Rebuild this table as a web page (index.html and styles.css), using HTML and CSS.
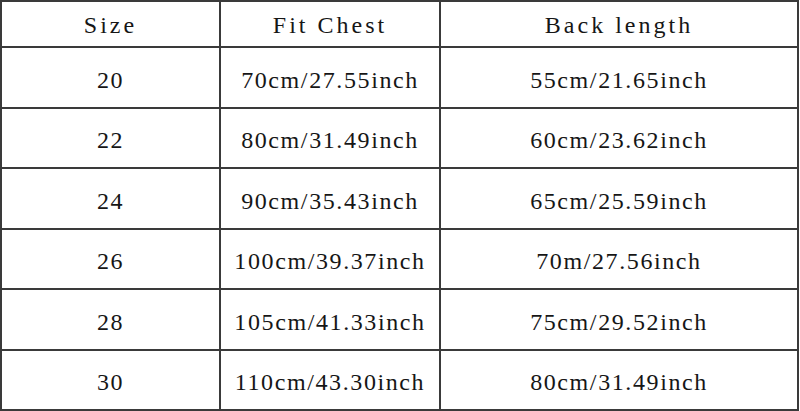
FILE: index.html
```html
<!DOCTYPE html>
<html>
<head>
<meta charset="utf-8">
<link rel="stylesheet" href="styles.css">
</head>
<body>
<div class="size-table">
  <div class="cell head">Size</div>
  <div class="cell head">Fit Chest</div>
  <div class="cell head">Back length</div>
  <div class="cell">20</div>
  <div class="cell">70cm/27.55inch</div>
  <div class="cell">55cm/21.65inch</div>
  <div class="cell">22</div>
  <div class="cell">80cm/31.49inch</div>
  <div class="cell">60cm/23.62inch</div>
  <div class="cell">24</div>
  <div class="cell">90cm/35.43inch</div>
  <div class="cell">65cm/25.59inch</div>
  <div class="cell">26</div>
  <div class="cell">100cm/39.37inch</div>
  <div class="cell">70m/27.56inch</div>
  <div class="cell">28</div>
  <div class="cell">105cm/41.33inch</div>
  <div class="cell">75cm/29.52inch</div>
  <div class="cell">30</div>
  <div class="cell">110cm/43.30inch</div>
  <div class="cell">80cm/31.49inch</div>
</div>
</body>
</html>
```

FILE: styles.css
```css
html, body {
  margin: 0;
  padding: 0;
  background: #ffffff;
}
.size-table {
  display: grid;
  width: 799px;
  box-sizing: border-box;
  grid-template-columns: 217px 218px 356px;
  grid-template-rows: 44px repeat(6, 58.5px);
  gap: 2px;
  padding: 2px;
  background: #3a3a3a;
  font-family: "Liberation Serif", serif;
  font-size: 24px;
  letter-spacing: 1.6px;
  color: #161616;
}
.cell {
  background: #ffffff;
  display: flex;
  align-items: center;
  justify-content: center;
  padding-top: 6px;
  box-sizing: border-box;
}
.head {
  padding-top: 3px;
  letter-spacing: 3px;
}
```
